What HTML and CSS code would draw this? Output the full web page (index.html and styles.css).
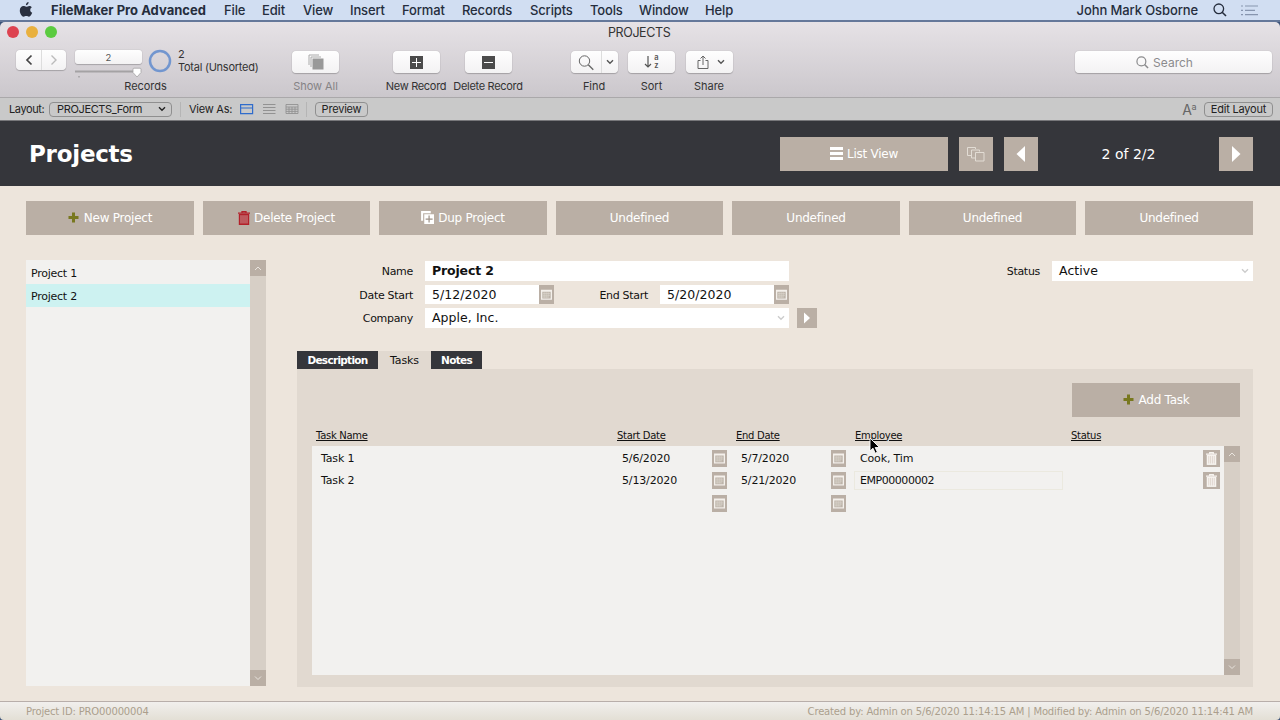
FILE: index.html
```html
<!DOCTYPE html>
<html lang="en">
<head>
<meta charset="UTF-8">
<meta name="viewport" content="width=device-width, initial-scale=1.0">
<title>PROJECTS</title>
<link rel="stylesheet" href="styles.css">
</head>
<body>
<!-- shared icons -->
<svg class="defs" width="0" height="0">
  <symbol id="calendar" viewBox="0 0 15 17">
    <rect x="2" y="3.500" width="11" height="10" fill="#f4f0eb"/>
    <rect x="3.300" y="5.500" width="8.400" height="6.800" fill="#bdb4aa"/>
    <path d="M4 7.200h7M4 9h7M4 10.800h5M5.200 6v5.600M7.200 6v5.600M9.200 6v5.600" stroke="#ddd7cf" stroke-width=".6"/>
  </symbol>
  <symbol id="trash" viewBox="0 0 12 14">
    <path d="M4 1.700V.6h4v1.100M0 2.200h12" fill="none" stroke="currentColor" stroke-width="1.300"/>
    <path d="M.8 3h10.400v11H.8z" fill="currentColor"/>
    <path d="M3 4.200v8.300M5 4.200v8.300M7 4.200v8.300M9 4.200v8.300" class="slots"/>
  </symbol>
  <symbol id="plus" viewBox="0 0 11 11">
    <path d="M4 .5h3V4h3.500v3H7v3.500H4V7H.5V4H4z" fill="#78781f"/>
  </symbol>
  <symbol id="up" viewBox="0 0 16 16">
    <path d="M5 10l3-3 3 3" fill="none" stroke="#e9e4de"/>
  </symbol>
  <symbol id="down" viewBox="0 0 16 16">
    <path d="M5 6.500l3 3 3-3" fill="none" stroke="#e9e4de"/>
  </symbol>
  <symbol id="chevron" viewBox="0 0 8 6">
    <path d="M1 1.200l3 3 3-3" fill="none" stroke="currentColor" stroke-width="1.400"/>
  </symbol>
  <symbol id="glass" viewBox="0 0 14 14">
    <path d="M9.200 9.200L13 13" stroke="currentColor" stroke-width="1.600"/>
    <circle cx="5.800" cy="5.800" r="4.800" fill="none" stroke="currentColor" stroke-width="1.300"/>
  </symbol>
</svg>

<div class="menubar">
  <svg class="apple" width="14" height="16" viewBox="0 0 14 16"><path d="M9.600 0c.1 1.800-1.100 3.200-2.700 3.300C6.700 1.700 8.100.2 9.600 0zM12.800 5.300c-2.300 1.500-1.900 4.500.4 5.500-.6 1.700-1.800 3.900-3.200 3.900-1.100 0-1.400-.6-2.700-.6s-1.700.6-2.700.6C2.900 14.700.8 11.500.8 8.500c0-2.900 1.800-4.500 3.600-4.500 1.200 0 2 .7 2.900.7.800 0 1.700-.8 3.100-.8.9 0 1.800.5 2.400 1.400z" fill="#2a3040"/></svg>
  <div class="menus">
    <b>FileMaker Pro Advanced</b>
    <span>File</span><span>Edit</span><span>View</span><span>Insert</span><span>Format</span><span>Records</span><span>Scripts</span><span>Tools</span><span>Window</span><span>Help</span>
  </div>
  <span class="user">John Mark Osborne</span>
  <svg class="spotlight" width="14" height="14"><use href="#glass"/></svg>
  <svg class="notif" width="17" height="11" viewBox="0 0 17 11"><path d="M0 1h2M4 1h13M0 5.300h2M4 5.300h10M0 9.600h2M4 9.600h13" stroke="#8795ae" stroke-width="1.200"/></svg>
</div>

<div class="window">
  <div class="titlebar">
    <i class="light red"></i><i class="light yellow"></i><i class="light green"></i>
    <span class="title">PROJECTS</span>
  </div>
  <div class="toolbar">
    <div class="tool records">
      <div class="tool-row">
        <div class="btn nav">
          <svg width="24" height="20"><path d="M14.500 5.500L10 10l4.500 4.500" fill="none" stroke="#444" stroke-width="1.700"/></svg>
          <svg class="split" width="25" height="20"><path d="M9.500 5.500L14 10l-4.500 4.500" fill="none" stroke="#bbb" stroke-width="1.400"/></svg>
        </div>
        <div class="counter">
          <div class="btn number">2</div>
          <svg width="70" height="14"><path d="M0 7.500h62" stroke="#a4a2a4" stroke-width="2"/><path d="M58 5.200q0-1 1-1h6q1 0 1 1v3.300L62 13l-4-4.500z" fill="#fff" stroke="#a5a3a5" stroke-width=".8"/><path d="M4 12v1.500" stroke="#888"/></svg>
        </div>
        <svg class="ring" width="24" height="24"><circle cx="12" cy="12" r="10" fill="none" stroke="#7296cf" stroke-width="2.500"/></svg>
        <div class="found">2<br>Total (Unsorted)</div>
      </div>
      <div class="label">Records</div>
    </div>
    <div class="tool show-all">
      <div class="btn"><svg width="16" height="16"><path d="M1 11V1h10" fill="none" stroke="#aaa"/><path d="M3 13V3h10" fill="none" stroke="#aaa"/><path d="M4.500 4.500h11v11h-11z" fill="#999"/></svg></div>
      <div class="label muted">Show All</div>
    </div>
    <div class="tool new">
      <div class="btn"><svg width="13" height="13"><path d="M0 0h13v13H0z" fill="#4b4b4b"/><path d="M6.500 2v9M2 6.500h9" stroke="#fff"/></svg></div>
      <div class="label">New Record</div>
    </div>
    <div class="tool delete">
      <div class="btn"><svg width="13" height="13"><path d="M0 0h13v13H0z" fill="#4b4b4b"/><path d="M2 6.500h9" stroke="#fff"/></svg></div>
      <div class="label">Delete Record</div>
    </div>
    <div class="tool find">
      <div class="btn">
        <svg width="30" height="21"><circle cx="13.500" cy="9" r="5.200" fill="none" stroke="#666"/><path d="M17.300 12.800l5 5" stroke="#666" stroke-width="1.300"/></svg>
        <span class="split"><svg width="8" height="6"><use href="#chevron"/></svg></span>
      </div>
      <div class="label">Find</div>
    </div>
    <div class="tool sort">
      <div class="btn">
        <svg width="8" height="14"><path d="M4 1v11M1 9l3 3 3-3" fill="none" stroke="#555" stroke-width="1.200"/></svg>
        <span class="az">a<br>z</span>
      </div>
      <div class="label">Sort</div>
    </div>
    <div class="tool share">
      <div class="btn">
        <svg width="12" height="15"><path d="M3.500 5.500H1v8h10v-8H8.500M6 10V1M3.500 3.500L6 1l2.500 2.500" fill="none" stroke="#666"/></svg>
        <svg width="8" height="6"><use href="#chevron"/></svg>
      </div>
      <div class="label">Share</div>
    </div>
    <div class="btn search"><svg width="13" height="13" viewBox="0 0 14 14"><use href="#glass"/></svg>Search</div>
  </div>

  <div class="layoutbar">
    <span class="layout-label">Layout:</span>
    <div class="pill select">PROJECTS_Form <svg width="8" height="6"><use href="#chevron"/></svg></div>
    <i class="sep"></i>
    <span class="view-label">View As:</span>
    <svg class="views" width="60" height="12"><path d="M.6 1.600h12v9H.6zM.6 5h12" fill="none" stroke="#2f6ccc" stroke-width="1.200"/><path d="M23 1.500h12.500M23 4.500h12.500M23 7.500h12.500M23 10.500h12.500" stroke="#929292"/><path d="M46 1.500h12v9H46zM46 4h12M46 6.200h12M46 8.400h12M49 4v6.500M52 4v6.500M55 4v6.500" fill="none" stroke="#929292" stroke-width=".9"/></svg>
    <i class="sep"></i>
    <div class="pill preview">Preview</div>
    <span class="aa">A<sup>a</sup></span>
    <div class="pill edit">Edit Layout</div>
  </div>
</div>

<div class="header">
  <h1>Projects</h1>
  <div class="button list-view"><svg width="13" height="13"><path d="M0 1.500h13M0 6.500h13M0 11.500h13" stroke="#fff" stroke-width="3"/></svg>List View</div>
  <div class="button square"><svg width="18" height="16"><path d="M4 9.500H.5v-8h8V3M8 12H4.500V4h8v1.500" fill="none" stroke="#e2dcd4"/><path d="M8.500 6.500h8.500v8.500H8.500z" fill="none" stroke="#e2dcd4"/></svg></div>
  <div class="button square prev"><svg width="10" height="16"><path d="M9 0v16L.5 8z" fill="#fff"/></svg></div>
  <div class="position">2 of 2/2</div>
  <div class="button square"><svg width="10" height="16"><path d="M1 0v16l8.500-8z" fill="#fff"/></svg></div>
</div>

<div class="content">
  <div class="actions">
    <div class="button"><svg class="plus" width="11" height="11"><use href="#plus"/></svg>New Project</div>
    <div class="button"><svg class="trash-red" width="12" height="14"><use href="#trash"/></svg>Delete Project</div>
    <div class="button"><svg class="dup" width="13" height="13" viewBox="0 0 14 14"><path d="M1.200 10.500V1.200h9.300" fill="none" stroke="#fff" stroke-width="2.200"/><path d="M3.500 3.500H14V14H3.500z" fill="#fff"/><path d="M8.700 4.800V12.500M5 8.700H12.500" stroke="#9d9288" stroke-width="1.300"/></svg>Dup Project</div>
    <div class="button">Undefined</div>
    <div class="button">Undefined</div>
    <div class="button">Undefined</div>
    <div class="button">Undefined</div>
  </div>

  <div class="main">
    <div class="project-list">
      <div class="rows">
        <div class="project">Project 1</div>
        <div class="project selected">Project 2</div>
      </div>
      <div class="scrollbar"><svg width="16" height="16"><use href="#up"/></svg><svg width="16" height="16"><use href="#down"/></svg></div>
    </div>

    <div class="detail">
      <div class="form">
        <label>Name</label>
        <div class="line">
          <div class="field wide name">Project 2</div>
          <label class="status-label">Status</label>
          <div class="field status">Active<svg width="8" height="6"><use href="#chevron"/></svg></div>
        </div>
        <label>Date Start</label>
        <div class="line">
          <div class="field date">5/12/2020</div><svg class="cal" width="15" height="20"><use href="#calendar"/></svg>
          <label class="end-label">End Start</label>
          <div class="field date">5/20/2020</div><svg class="cal" width="15" height="20"><use href="#calendar"/></svg>
        </div>
        <label>Company</label>
        <div class="line">
          <div class="field wide">Apple, Inc.<svg width="8" height="6"><use href="#chevron"/></svg></div>
          <svg class="goto" width="20" height="20"><path d="M7 4.500v11l6-5.500z" fill="#fff"/></svg>
        </div>
      </div>

      <div class="tabs">
        <div class="tab description">Description</div>
        <div class="tab active">Tasks</div>
        <div class="tab notes">Notes</div>
      </div>
      <div class="panel">
        <div class="button add-task"><svg class="plus" width="11" height="11"><use href="#plus"/></svg>Add Task</div>
        <div class="task headings">
          <u>Task Name</u><u>Start Date</u><i></i><u>End Date</u><i></i><u>Employee</u><u class="status-head">Status</u>
        </div>
        <div class="portal">
          <div class="rows">
            <div class="task">
              <span>Task 1</span><span>5/6/2020</span><svg class="cal" width="15" height="17"><use href="#calendar"/></svg>
              <span>5/7/2020</span><svg class="cal" width="15" height="17"><use href="#calendar"/></svg>
              <span class="employee">Cook, Tim</span><span></span>
              <div class="remove"><svg width="11" height="13"><use href="#trash"/></svg></div>
            </div>
            <div class="task">
              <span>Task 2</span><span>5/13/2020</span><svg class="cal" width="15" height="17"><use href="#calendar"/></svg>
              <span>5/21/2020</span><svg class="cal" width="15" height="17"><use href="#calendar"/></svg>
              <span class="employee editing">EMP00000002</span><span></span>
              <div class="remove"><svg width="11" height="13"><use href="#trash"/></svg></div>
            </div>
            <div class="task">
              <span></span><span></span><svg class="cal" width="15" height="17"><use href="#calendar"/></svg>
              <span></span><svg class="cal" width="15" height="17"><use href="#calendar"/></svg>
            </div>
          </div>
          <div class="scrollbar"><svg width="16" height="16"><use href="#up"/></svg><svg width="16" height="16"><use href="#down"/></svg></div>
        </div>
      </div>
    </div>
  </div>
</div>

<div class="footer">
  <span>Project ID: PRO00000004</span>
  <span class="stamp">Created by: Admin on 5/6/2020 11:14:15 AM | Modified by: Admin on 5/6/2020 11:14:41 AM</span>
</div>

<svg class="cursor" width="13" height="18"><path d="M1 1v13l3-2.800 2.200 5 2.200-1-2.200-4.700h4.300z" fill="#000" stroke="#fff" stroke-width=".9"/></svg>
</body>
</html>
```
FILE: styles.css
```css
* {
  box-sizing: border-box;
}

body {
  margin: 0;
  width: 1280px;
  height: 720px;
  overflow: hidden;
  display: flex;
  flex-direction: column;
  background: #3c5378;
  font-family: "DejaVu Sans", Verdana, sans-serif;
  font-size: 11px;
  color: #111;
  white-space: nowrap;
}

svg {
  display: block;
  flex: none;
}

.defs {
  position: absolute;
}

/* macOS menu bar */
.menubar {
  height: 22px;
  flex: none;
  display: flex;
  align-items: center;
  padding: 0 22px 0 19px;
  background: #d1def2;
  border-bottom: 2px solid #65789a;
  font-family: Inter, sans-serif;
  font-size: 13px;
  font-weight: 500;
  color: #252d3d;
}

.menus {
  display: grid;
  grid-template-columns: 173px 38px 41px 47px 52px 60px 68px 60px 49px 66px 40px;
  margin-left: 18px;
  letter-spacing: -0.15px;
}

.menus b {
  font-weight: 700;
  letter-spacing: 0.02px;
}

.user {
  margin-left: auto;
  letter-spacing: -0.1px;
}

.spotlight {
  margin-left: 15px;
}

.notif {
  margin-left: 14px;
}

/* window chrome */
.window {
  height: 99px;
  flex: none;
  background: linear-gradient(#e6e2e6, #cbc7cc 75px, #c9c9c9 76px);
  border-radius: 5px 5px 0 0;
  font-family: Inter, sans-serif;
  color: #333;
  border-bottom: 1px solid #77777a;
}

.titlebar {
  height: 20px;
  display: flex;
  align-items: center;
  padding-left: 7px;
  gap: 7px;
}

.light {
  width: 12px;
  height: 12px;
  border-radius: 50%;
}

.red { background: #dd4350; }
.yellow { background: #e9b03e; }
.green { background: #5bcb40; }

.title {
  margin-left: 544px;
  font-size: 12.5px;
  letter-spacing: -0.4px;
}

.toolbar {
  height: 56px;
  display: flex;
  padding: 5px 8px 0 16px;
  border-bottom: 1px solid #aaa8aa;
}

.tool {
  display: flex;
  flex-direction: column;
  align-items: center;
  padding-top: 4px;
}

.label {
  margin-top: 6px;
  font-size: 11px;
  line-height: 15px;
  letter-spacing: -0.05px;
}

.muted {
  color: #858385;
}

.btn {
  width: 47px;
  height: 22px;
  display: flex;
  align-items: center;
  justify-content: center;
  background: linear-gradient(#fefefe, #f3f2f3);
  border-radius: 4px;
  box-shadow: 0 0 1px rgba(0, 0, 0, 0.3), 0 1px 1px rgba(0, 0, 0, 0.2);
  color: #555;
}

.records {
  width: 259px;
  padding-top: 0;
}

.tool-row {
  display: flex;
  width: 100%;
  height: 28px;
}

.records .label {
  margin-top: 4px;
}

.nav {
  width: 50px;
  height: 20px;
  margin-top: 3px;
}

.split {
  border-left: 1px solid #ddd;
}

.counter {
  margin: 3px 0 0 9px;
  width: 67px;
}

.btn.number {
  width: 67px;
  height: 14px;
  border-radius: 3px;
  font-size: 9.5px;
}

.ring {
  margin: 2px 0 0 6px;
}

.found {
  margin: 1px 0 0 6px;
  font-size: 11px;
  line-height: 13px;
  letter-spacing: -0.25px;
}

.show-all { width: 81px; }
.new { width: 72px; margin-left: 24px; }
.delete { width: 72px; }
.new .label,
.delete .label { letter-spacing: -0.3px; }
.find { width: 58px; margin-left: 41px; }
.sort { width: 57px; }
.share { width: 58px; }

.find .btn {
  justify-content: flex-start;
}

.find .split {
  height: 22px;
  padding: 8px 4px;
}

.az {
  margin-left: 2px;
  font-size: 7.5px;
  line-height: 8px;
  font-weight: 600;
}

.share .btn {
  gap: 8px;
  padding-left: 3px;
}

.btn.search {
  width: 197px;
  margin: 4px 0 0 auto;
  gap: 4px;
  padding-right: 18px;
  font-size: 12px;
  color: #8b8b8d;
}

.layoutbar {
  height: 22px;
  display: flex;
  align-items: center;
  padding: 0 7px 0 9px;
  font-size: 11px;
  color: #222;
}

.layout-label { width: 40px; letter-spacing: -0.4px; }
.view-label { width: 51px; letter-spacing: -0.25px; }

.pill {
  height: 15px;
  display: flex;
  align-items: center;
  justify-content: center;
  border: 1px solid #8f8f8f;
  border-radius: 4px;
}

.select {
  width: 123px;
  justify-content: space-between;
  padding: 0 5px 0 7px;
  letter-spacing: -0.35px;
}

.sep {
  width: 1px;
  height: 15px;
  margin: 0 8px;
  background: #b5b5b5;
}

.views { margin-right: -2px; }
.preview { width: 53px; letter-spacing: -0.2px; }
.edit { width: 69px; letter-spacing: -0.2px; }

.aa {
  margin: 0 8px 0 auto;
  font-size: 14px;
  color: #666;
  letter-spacing: -0.5px;
}

.aa sup {
  font-size: 9px;
  line-height: 0;
  vertical-align: 5px;
}

/* layout header */
.header {
  height: 65px;
  flex: none;
  display: flex;
  align-items: center;
  padding: 0 27px 0 29px;
  background: #35363b;
  color: #fff;
}

h1 {
  margin: 0;
  font-size: 23px;
  letter-spacing: -0.25px;
}

.button {
  height: 34px;
  display: flex;
  align-items: center;
  justify-content: center;
  gap: 4px;
  background: #baafa5;
  color: #fff;
  font-size: 12px;
  letter-spacing: -0.25px;
}

.button .plus {
  margin-right: 1px;
}

.list-view {
  width: 168px;
  margin-left: auto;
}

.square {
  width: 34px;
  margin-left: 11px;
}

.position {
  width: 181px;
  margin-right: -11px;
  text-align: center;
  font-size: 14px;
}

.content {
  flex: 1;
  padding: 15px 27px 0 26px;
  background: #ede5dc;
}

.actions {
  display: grid;
  grid-template-columns: repeat(7, 1fr);
  gap: 8.6px;
}

.actions .button {
  height: 33.5px;
}

.trash-red {
  color: #b3202a;
}

.slots {
  stroke: #d3c6be;
  stroke-width: 0.7;
}

.main {
  display: flex;
  gap: 31px;
  margin-top: 25.5px;
}

.project-list {
  width: 240px;
  height: 426px;
  display: flex;
}

.rows {
  flex: 1;
  background: #f2f1ef;
}

.project {
  height: 23.5px;
  line-height: 27px;
  padding-left: 5px;
  letter-spacing: -0.25px;
}

.selected {
  background: #cdf2f1;
  line-height: 25px;
}

.scrollbar {
  width: 16px;
  display: flex;
  flex-direction: column;
  justify-content: space-between;
  background: #d7cfc6;
}

.scrollbar svg {
  background: #baafa5;
}

/* record form */
.detail {
  flex: 1;
}

.form {
  display: grid;
  grid-template-columns: 116px 1fr;
  column-gap: 12px;
  row-gap: 4px;
  padding-top: 1px;
}

.form label {
  text-align: right;
  line-height: 22px;
  height: 19.5px;
  letter-spacing: -0.3px;
}

.line {
  display: flex;
  height: 19.5px;
}

.field {
  display: flex;
  align-items: center;
  justify-content: space-between;
  padding: 0 4px 0 7px;
  background: #fff;
  font-size: 12.5px;
  letter-spacing: 0.05px;
}

.field svg {
  color: #ccc;
}

.wide { width: 364px; }
.name { font-weight: bold; letter-spacing: -0.15px; }
.date { width: 114px; }
.status { width: 201px; }

.form .status-label {
  margin-left: auto;
  margin-right: 12px;
}

.form .end-label {
  width: 94px;
  margin-right: 12px;
}

.cal {
  background: #baafa5;
}

.line .cal {
  height: 19.5px;
}

.goto {
  margin-left: 8px;
  background: #baafa5;
}

.tabs {
  display: flex;
  margin-top: 23.5px;
  height: 18px;
}

.tab {
  display: flex;
  align-items: center;
  justify-content: center;
  background: #35363b;
  color: #fff;
  font-weight: bold;
  font-size: 10.5px;
  letter-spacing: -0.7px;
}

.description { width: 81px; }
.notes { width: 51px; }

.tab.active {
  width: 53px;
  background: #e1d9d0;
  color: #111;
  font-size: 11px;
  font-weight: normal;
  letter-spacing: -0.1px;
}

.panel {
  height: 317.5px;
  padding: 13.5px 13px 0 15px;
  background: #e1d9d0;
}

.add-task {
  width: 168px;
  margin-left: auto;
}

.task {
  display: grid;
  grid-template-columns: 300px 100px 19px 100px 19px 213px 140px 17px;
  align-items: center;
  height: 22.5px;
  letter-spacing: -0.15px;
}

.task span {
  padding-left: 10px;
}

.task span:first-child {
  padding-left: 9px;
}

.headings {
  height: 29.5px;
  padding-top: 8px;
  font-size: 10px;
  letter-spacing: -0.3px;
}

.headings u {
  padding-left: 5px;
}

.headings u:first-child {
  padding-left: 4px;
}

.headings .status-head {
  padding-left: 8px;
}

.portal {
  display: flex;
  height: 229px;
}

.portal .rows {
  padding-top: 1px;
}

.task .employee {
  height: 19px;
  line-height: 17px;
  margin-left: 4px;
  padding-left: 5px;
  border: 1px solid transparent;
}

.task .editing {
  border-color: #ebe9df;
  letter-spacing: -0.45px;
}

.remove {
  width: 17px;
  height: 17px;
  display: flex;
  align-items: center;
  justify-content: center;
  background: #baafa5;
  color: #f7f4f0;
}

.footer {
  height: 19px;
  flex: none;
  display: flex;
  align-items: center;
  justify-content: space-between;
  padding: 0 27px 0 26px;
  border-top: 1px solid #b8aeaa;
  border-radius: 0 0 4px 4px;
  background: linear-gradient(#f1efed, #e3dfd5);
  color: #ab9f8d;
  font-size: 10px;
  letter-spacing: -0.16px;
}

.cursor {
  position: absolute;
  left: 869px;
  top: 437px;
}
```
